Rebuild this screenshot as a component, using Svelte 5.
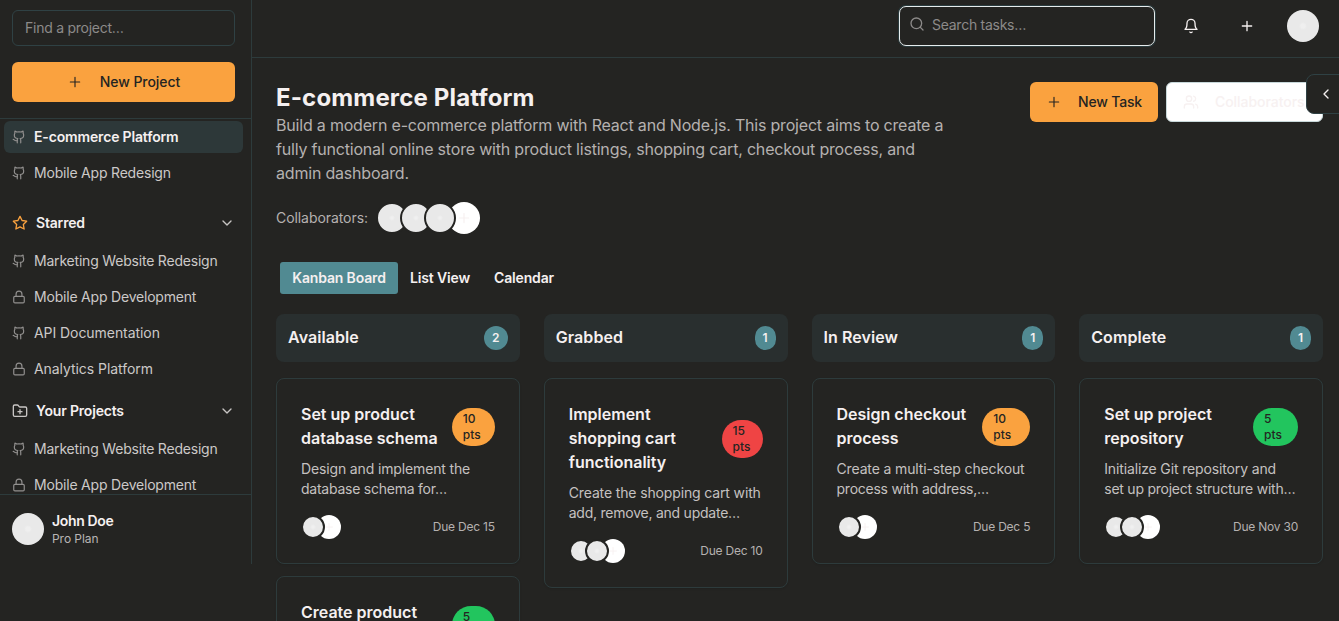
<script>
  const recent = [
    { name: 'E-commerce Platform', icon: 'github', active: true },
    { name: 'Mobile App Redesign', icon: 'github' }
  ];
  const starred = [
    { name: 'Marketing Website Redesign', icon: 'github' },
    { name: 'Mobile App Development', icon: 'lock' },
    { name: 'API Documentation', icon: 'github', loose: true },
    { name: 'Analytics Platform', icon: 'lock', loose: true }
  ];
  const own = starred.slice(0, 2);
  const columns = [
    {
      title: 'Available',
      count: 2,
      cards: [
        { title: ['Set up product', 'database schema'], pts: 10, tone: 'orange', w: 43, text: ['Design and implement the', 'database schema for…'], people: 1, due: 'Due Dec 15' },
        { title: ['Create product', 'listing page'], pts: 5, tone: 'green', w: 43, text: ['Develop the product listing', 'page with filtering…'], people: 1, due: 'Due Dec 20' }
      ]
    },
    {
      title: 'Grabbed',
      count: 1,
      cards: [
        { title: ['Implement', 'shopping cart', 'functionality'], pts: 15, tone: 'red', w: 41, text: ['Create the shopping cart with', 'add, remove, and update…'], people: 2, due: 'Due Dec 10' }
      ]
    },
    {
      title: 'In Review',
      count: 1,
      cards: [
        { title: ['Design checkout', 'process'], pts: 10, tone: 'orange', w: 48, text: ['Create a multi-step checkout', 'process with address,…'], people: 1, due: 'Due Dec 5' }
      ]
    },
    {
      title: 'Complete',
      count: 1,
      cards: [
        { title: ['Set up project', 'repository'], pts: 5, tone: 'green', w: 45, text: ['Initialize Git repository and', 'set up project structure with…'], people: 2, due: 'Due Nov 30' }
      ]
    }
  ];
  const icons = {
    github: '<path d="M15 22v-4a4.8 4.8 0 0 0-1-3.5c3 0 6-2 6-5.5.08-1.25-.27-2.48-1-3.5.28-1.15.28-2.35 0-3.5 0 0-1 0-3 1.5-2.64-.5-5.36-.5-8 0C6 2 5 2 5 2c-.3 1.15-.3 2.35 0 3.5A5.403 5.403 0 0 0 4 9c0 3.5 3 5.5 6 5.5-.39.49-.68 1.05-.85 1.65-.17.6-.22 1.23-.15 1.85v4"/><path d="M9 18c-4.51 2-5-2-7-2"/>',
    lock: '<rect width="18" height="11" x="3" y="11" rx="2"/><path d="M7 11V7a5 5 0 0 1 10 0v4"/>',
    plus: '<path d="M5 12h14M12 5v14"/>',
    star: '<path d="M12 2l3.09 6.26L22 9.27l-5 4.87 1.18 6.88L12 17.77l-6.18 3.25L7 14.14 2 9.27l6.91-1.01L12 2z"/>',
    folder: '<path d="M12 10v6M9 13h6"/><path d="M20 20a2 2 0 0 0 2-2V8a2 2 0 0 0-2-2h-7.9a2 2 0 0 1-1.69-.9L9.6 3.9A2 2 0 0 0 7.93 3H4a2 2 0 0 0-2 2v13a2 2 0 0 0 2 2Z"/>',
    down: '<path d="m6 9 6 6 6-6"/>',
    left: '<path d="m15 18-6-6 6-6"/>',
    search: '<circle cx="11" cy="11" r="8"/><path d="m21 21-4.3-4.3"/>',
    bell: '<path d="M6 8a6 6 0 0 1 12 0c0 7 3 9 3 9H3s3-2 3-9"/><path d="M10.3 21a1.94 1.94 0 0 0 3.4 0"/>',
    users: '<path d="M16 21v-2a4 4 0 0 0-4-4H6a4 4 0 0 0-4 4v2"/><circle cx="9" cy="7" r="4"/><path d="M22 21v-2a4 4 0 0 0-3-3.87M16 3.13a4 4 0 0 1 0 7.75"/>'
  };
</script>

{#snippet icon(name, size = 16)}
  <svg class="icon" width={size} height={size} viewBox="0 0 24 24">{@html icons[name]}</svg>
{/snippet}

{#snippet projectList(items)}
  <ul class="projects">
    {#each items as p}
      <li class:active={p.active} class:loose={p.loose}>{@render icon(p.icon, 14)}<span>{p.name}</span></li>
    {/each}
  </ul>
{/snippet}

<div class="app">
  <aside>
    <div class="side-top">
      <input class="find" placeholder="Find a project…" />
      <button class="primary new-project">{@render icon('plus')}<span>New Project</span></button>
    </div>
    <nav>
      {@render projectList(recent)}
      <div class="group starred">{@render icon('star')}<span>Starred</span>{@render icon('down')}</div>
      {@render projectList(starred)}
      <div class="group own">{@render icon('folder')}<span>Your Projects</span>{@render icon('down')}</div>
      {@render projectList(own)}
    </nav>
    <div class="user">
      <i class="avatar"></i>
      <div><strong>John Doe</strong><small>Pro Plan</small></div>
    </div>
  </aside>

  <div class="content">
    <header>
      <label class="search">{@render icon('search')}<input placeholder="Search tasks…" /></label>
      <button class="ghost">{@render icon('bell')}</button>
      <button class="ghost">{@render icon('plus')}</button>
      <button class="ghost"><i class="avatar"></i></button>
    </header>

    <main>
      <section class="intro">
        <div>
          <h1>E-commerce Platform</h1>
          <p class="lead">Build a modern e-commerce platform with React and Node.js. This project aims to create a<br />fully functional online store with product listings, shopping cart, checkout process, and<br />admin dashboard.</p>
        </div>
        <div class="actions">
          <button class="primary new-task">{@render icon('plus')}<span>New Task</span></button>
          <button class="outline">{@render icon('users')}<span>Collaborators</span></button>
        </div>
      </section>

      <div class="collab">
        <span>Collaborators:</span>
        <div class="stack big"><i></i><i></i><i></i><b>{@render icon('plus', 16)}</b></div>
      </div>

      <div class="tabs">
        <button class="on"><span>Kanban Board</span></button>
        <button class="t2"><span>List View</span></button>
        <button><span>Calendar</span></button>
      </div>

      <div class="board">
        {#each columns as col}
          <section class="column">
            <div class="col-head"><h2>{col.title}</h2><span class="count" class:wide={col.count === 2}>{col.count}</span></div>
            {#each col.cards as card}
              <article>
                <div class="card-head">
                  <h3>{#each card.title as line}<span>{line}</span>{/each}</h3>
                  <div class="pts {card.tone}" style="width: {card.w}px">{card.pts}<br />pts</div>
                </div>
                <p>{#each card.text as line}<span>{line}</span>{/each}</p>
                <div class="card-foot">
                  <div class="stack">{#each Array(card.people) as _}<i></i>{/each}<b>{@render icon('plus', 12)}</b></div>
                  <time>{card.due}</time>
                </div>
              </article>
            {/each}
          </section>
        {/each}
      </div>
    </main>
  </div>
  <button class="drawer">{@render icon('left')}</button>
</div>

<style>
  :global(body) { background: #242422; overflow: hidden; }
  * { box-sizing: border-box; }
  .app {
    position: relative; display: flex; align-items: flex-start; height: 621px; overflow: hidden;
    background: #242422; color: #f5f0f0; font-family: Inter, sans-serif; font-size: 14px; line-height: 20px;
    white-space: nowrap;
  }
  .icon { flex: none; fill: none; stroke: currentColor; stroke-width: 2; stroke-linecap: round; stroke-linejoin: round; }
  button, input { font: inherit; color: inherit; border: 0; padding: 0; margin: 0; background: none; outline: 0; }
  input { letter-spacing: -0.26px; }
  input::placeholder { color: #8c8a89; opacity: 1; }
  h1, h2, h3, p, ul { margin: 0; padding: 0; }
  button { display: flex; align-items: center; justify-content: center; font-weight: 500; letter-spacing: -0.05px; }

  aside { display: flex; flex-direction: column; width: 252px; height: 564px; flex: none; border-right: 1px solid #2d3b3c; }
  .side-top { display: flex; flex-direction: column; gap: 16px; height: 119px; padding: 10px 16px 0 12px; border-bottom: 1px solid #2d3b3c; flex: none; }
  .find { height: 36px; width: 100%; padding: 0 12px 1px; border: 1px solid #2f4144; border-radius: 6px; }
  .primary { height: 40px; border-radius: 6px; background: #faa23f; color: #242422; gap: 16px; font-weight: 500; }
  .new-project { width: 100%; }
  .new-project span { margin-left: 1px; }
  .primary .icon { stroke-width: 1.7; }
  nav { flex: 1; min-height: 0; overflow: hidden; padding: 2px 8px 0 4px; }
  .projects { display: flex; flex-direction: column; gap: 4px; list-style: none; }
  .projects li { display: flex; align-items: center; gap: 8px; height: 32px; padding: 0 8px; border-radius: 6px; color: #ccc9c8; letter-spacing: -0.2px; }
  .projects .loose { letter-spacing: -0.06px; }
  .projects .icon { color: #92908f; stroke-width: 2; }
  .projects .active { background: #2d3839; color: #f5f0f0; font-weight: 600; letter-spacing: -0.16px; }
  .group { display: flex; align-items: center; gap: 8px; height: 32px; padding: 0 8px; font-weight: 600; letter-spacing: -0.18px; color: #f5f0f0; }
  .group span { flex: 1; }
  .group .icon { color: #c8c5c4; }
  .starred { margin: 18px 0 6px; }
  .starred .icon:first-child { color: #faa23f; }
  .own { margin: 10px 0 6px; }
  .user { display: flex; align-items: center; gap: 8px; height: 70px; padding: 0 12px 2px; border-top: 1px solid #2d3b3c; }
  .user div { display: flex; flex-direction: column; }
  .user strong { font-weight: 600; line-height: 20px; letter-spacing: -0.35px; }
  .user small { font-size: 12px; line-height: 16px; letter-spacing: -0.05px; color: #b8b5b4; }
  .avatar { display: block; width: 32px; height: 32px; border-radius: 50%; background: radial-gradient(circle, #efefef 0 2px, #e9e9e9 4px); }

  .content { flex: 1; min-width: 0; }
  header { display: flex; justify-content: flex-end; align-items: flex-start; gap: 16px; height: 58px; padding: 6px 16px 0 0; border-bottom: 1px solid #2d3b3c; }
  .search { display: flex; gap: 7px; width: 256px; height: 40px; padding: 0 9px; border: 1px solid #e6eced; border-radius: 7px; box-shadow: 0 0 0 1px #2b3c3f; }
  .search .icon { margin-top: 9px; color: #8c8a89; }
  .search input { flex: 1; min-width: 0; height: 36px; padding-bottom: 1px; }
  .ghost { width: 40px; height: 40px; }

  main { padding: 24px 16px 0 24px; }
  .intro { display: flex; justify-content: space-between; height: 104px; }
  h1 { font-size: 24px; line-height: 32px; font-weight: 700; letter-spacing: 0.16px; }
  .lead { margin-top: -1px; font-size: 16px; line-height: 24px; letter-spacing: -0.195px; color: #b5b1b0; }
  .actions { display: flex; gap: 8px; }
  .new-task { width: 128px; letter-spacing: -0.2px; }
  .outline { width: 157px; height: 40px; justify-content: flex-start; padding-left: 16px; gap: 16px; border: 1px solid #c8d8da; border-radius: 6px; background: #fff; color: #f7f1f1; }
  .collab { display: flex; align-items: center; gap: 8px; height: 32px; margin-top: 16px; color: #b5b1b0; }
  .collab > span { width: 92px; letter-spacing: -0.07px; }
  .stack { display: flex; }
  .stack i { position: relative; width: 24px; height: 24px; margin-right: -8px; border: 2px solid #242422; border-radius: 50%; background: radial-gradient(circle, #f0f0f0 0 1px, #e9e9e9 3px); }
  .stack b { display: flex; align-items: center; justify-content: center; width: 24px; height: 24px; border-radius: 50%; background: #fff; color: #f7f1f1; }
  .stack .icon { stroke-width: 1.8; }
  .big i, .big b { width: 32px; height: 32px; }

  .tabs { display: flex; height: 40px; margin-top: 24px; padding: 4px; }
  .tabs button { height: 32px; padding: 0 12px; border-radius: 3px; font-weight: 600; letter-spacing: -0.15px; }
  .tabs .on { width: 118px; background: #518a92; }
  .tabs .t2 { width: 84px; }

  .board { display: grid; grid-template-columns: repeat(4, minmax(0, 1fr)); gap: 24px; margin-top: 16px; align-items: start; }
  .column { display: flex; flex-direction: column; gap: 12px; }
  .col-head { display: flex; align-items: center; justify-content: space-between; height: 48px; margin-bottom: 4px; padding: 0 12px; border-radius: 8px; background: #292f2f; }
  h2 { padding-bottom: 2px; font-size: 16px; line-height: 24px; font-weight: 600; letter-spacing: 0.08px; }
  .count { width: 21px; height: 24px; border-radius: 12px; background: #518a92; font-size: 12px; line-height: 24px; font-weight: 600; text-align: center; }
  .wide { width: 24px; }
  article { padding: 23px 24px 24px; border: 1px solid #2d3b3c; border-radius: 8px; box-shadow: 0 1px 2px rgb(0 0 0 / 10%); }
  .card-head { display: flex; align-items: center; justify-content: space-between; }
  h3 { font-size: 16px; line-height: 24px; font-weight: 600; letter-spacing: 0; }
  h3 span, p span { display: block; }
  article p { margin-top: 9px; letter-spacing: -0.14px; color: #c4c1c0; }
  article p span:last-child { letter-spacing: -0.24px; }
  .pts { flex: none; height: 38px; margin: 2px 0 0; padding: 3px 0 0 11px; border-radius: 19px; font-size: 12px; line-height: 16px; font-weight: 550; color: #242422; }
  .orange { background: #faa23f; }
  .green { background: #22c55e; }
  .red { background: #ef4444; }
  .card-foot { display: flex; align-items: center; justify-content: space-between; margin-top: 16px; }
  time { font-size: 12px; line-height: 16px; letter-spacing: -0.22px; color: #b5b1b0; }
  .drawer { position: absolute; top: 74px; right: -1px; width: 34px; height: 40px; padding-left: 5px; border: 1px solid #2f4144; border-radius: 8px 0 0 8px; background: #242422; }
</style>
